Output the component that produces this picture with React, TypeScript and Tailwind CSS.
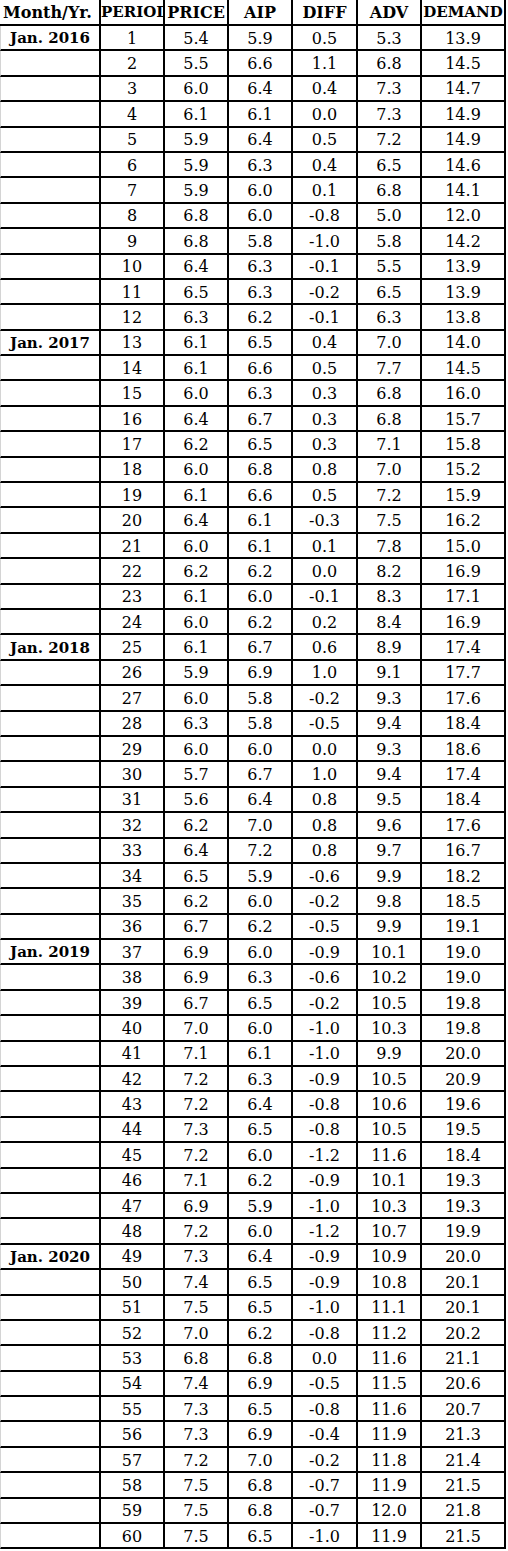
const rows: [string, number, string, string, string, string, string][] = [
  ["Jan. 2016", 1, "5.4", "5.9", "0.5", "5.3", "13.9"],
  ["", 2, "5.5", "6.6", "1.1", "6.8", "14.5"],
  ["", 3, "6.0", "6.4", "0.4", "7.3", "14.7"],
  ["", 4, "6.1", "6.1", "0.0", "7.3", "14.9"],
  ["", 5, "5.9", "6.4", "0.5", "7.2", "14.9"],
  ["", 6, "5.9", "6.3", "0.4", "6.5", "14.6"],
  ["", 7, "5.9", "6.0", "0.1", "6.8", "14.1"],
  ["", 8, "6.8", "6.0", "-0.8", "5.0", "12.0"],
  ["", 9, "6.8", "5.8", "-1.0", "5.8", "14.2"],
  ["", 10, "6.4", "6.3", "-0.1", "5.5", "13.9"],
  ["", 11, "6.5", "6.3", "-0.2", "6.5", "13.9"],
  ["", 12, "6.3", "6.2", "-0.1", "6.3", "13.8"],
  ["Jan. 2017", 13, "6.1", "6.5", "0.4", "7.0", "14.0"],
  ["", 14, "6.1", "6.6", "0.5", "7.7", "14.5"],
  ["", 15, "6.0", "6.3", "0.3", "6.8", "16.0"],
  ["", 16, "6.4", "6.7", "0.3", "6.8", "15.7"],
  ["", 17, "6.2", "6.5", "0.3", "7.1", "15.8"],
  ["", 18, "6.0", "6.8", "0.8", "7.0", "15.2"],
  ["", 19, "6.1", "6.6", "0.5", "7.2", "15.9"],
  ["", 20, "6.4", "6.1", "-0.3", "7.5", "16.2"],
  ["", 21, "6.0", "6.1", "0.1", "7.8", "15.0"],
  ["", 22, "6.2", "6.2", "0.0", "8.2", "16.9"],
  ["", 23, "6.1", "6.0", "-0.1", "8.3", "17.1"],
  ["", 24, "6.0", "6.2", "0.2", "8.4", "16.9"],
  ["Jan. 2018", 25, "6.1", "6.7", "0.6", "8.9", "17.4"],
  ["", 26, "5.9", "6.9", "1.0", "9.1", "17.7"],
  ["", 27, "6.0", "5.8", "-0.2", "9.3", "17.6"],
  ["", 28, "6.3", "5.8", "-0.5", "9.4", "18.4"],
  ["", 29, "6.0", "6.0", "0.0", "9.3", "18.6"],
  ["", 30, "5.7", "6.7", "1.0", "9.4", "17.4"],
  ["", 31, "5.6", "6.4", "0.8", "9.5", "18.4"],
  ["", 32, "6.2", "7.0", "0.8", "9.6", "17.6"],
  ["", 33, "6.4", "7.2", "0.8", "9.7", "16.7"],
  ["", 34, "6.5", "5.9", "-0.6", "9.9", "18.2"],
  ["", 35, "6.2", "6.0", "-0.2", "9.8", "18.5"],
  ["", 36, "6.7", "6.2", "-0.5", "9.9", "19.1"],
  ["Jan. 2019", 37, "6.9", "6.0", "-0.9", "10.1", "19.0"],
  ["", 38, "6.9", "6.3", "-0.6", "10.2", "19.0"],
  ["", 39, "6.7", "6.5", "-0.2", "10.5", "19.8"],
  ["", 40, "7.0", "6.0", "-1.0", "10.3", "19.8"],
  ["", 41, "7.1", "6.1", "-1.0", "9.9", "20.0"],
  ["", 42, "7.2", "6.3", "-0.9", "10.5", "20.9"],
  ["", 43, "7.2", "6.4", "-0.8", "10.6", "19.6"],
  ["", 44, "7.3", "6.5", "-0.8", "10.5", "19.5"],
  ["", 45, "7.2", "6.0", "-1.2", "11.6", "18.4"],
  ["", 46, "7.1", "6.2", "-0.9", "10.1", "19.3"],
  ["", 47, "6.9", "5.9", "-1.0", "10.3", "19.3"],
  ["", 48, "7.2", "6.0", "-1.2", "10.7", "19.9"],
  ["Jan. 2020", 49, "7.3", "6.4", "-0.9", "10.9", "20.0"],
  ["", 50, "7.4", "6.5", "-0.9", "10.8", "20.1"],
  ["", 51, "7.5", "6.5", "-1.0", "11.1", "20.1"],
  ["", 52, "7.0", "6.2", "-0.8", "11.2", "20.2"],
  ["", 53, "6.8", "6.8", "0.0", "11.6", "21.1"],
  ["", 54, "7.4", "6.9", "-0.5", "11.5", "20.6"],
  ["", 55, "7.3", "6.5", "-0.8", "11.6", "20.7"],
  ["", 56, "7.3", "6.9", "-0.4", "11.9", "21.3"],
  ["", 57, "7.2", "7.0", "-0.2", "11.8", "21.4"],
  ["", 58, "7.5", "6.8", "-0.7", "11.9", "21.5"],
  ["", 59, "7.5", "6.8", "-0.7", "12.0", "21.8"],
  ["", 60, "7.5", "6.5", "-1.0", "11.9", "21.5"],
]

// column widths incl. the 2px right rule of each cell
const colW = ["w-[101px]", "w-[64px]", "w-[64px]", "w-[64px]", "w-[65px]", "w-[64px]", "w-[84px]"]

export default function App() {
  return (
    <div className="w-[508px] h-[1551px] bg-white text-black font-['DejaVu_Serif',serif]">
      {/* Header */}
      <div className="flex h-[26px] font-bold text-[16px] leading-none">
        <div className={`${colW[0]} border-r-2 border-b-2 border-black flex items-center pl-[3px] pt-[1px] overflow-hidden whitespace-nowrap`}>
          Month/Yr.
        </div>
        <div className={`${colW[1]} border-r-2 border-b-2 border-black flex items-center pt-[1px] overflow-hidden whitespace-nowrap text-[15px]`}>
          PERIOD
        </div>
        {["PRICE", "AIP", "DIFF", "ADV"].map((h, i) => (
          <div
            key={h}
            className={`${colW[i + 2]} border-r-2 border-b-2 border-black flex items-center justify-center pt-[1px] overflow-hidden whitespace-nowrap`}
          >
            {h}
          </div>
        ))}
        <div className={`${colW[6]} border-r-2 border-b-2 border-black flex items-center justify-center pt-[1px] overflow-hidden whitespace-nowrap text-[15px]`}>
          DEMAND
        </div>
      </div>

      {/* Body */}
      {rows.map((r) => (
        <div key={r[1]} className="flex h-[25.4px] text-[16px] leading-none">
          <div className={`${colW[0]} border-r-2 border-b-2 border-black border-l border-l-[#d4d4d4] flex items-center justify-center pt-[2px] font-bold text-[15px]`}>
            {r[0]}
          </div>
          {r.slice(1).map((v, i) => (
            <div
              key={i}
              className={`${colW[i + 1]} border-r-2 border-b-2 border-black flex items-center justify-center pt-[2px]`}
            >
              {v}
            </div>
          ))}
        </div>
      ))}
    </div>
  )
}
